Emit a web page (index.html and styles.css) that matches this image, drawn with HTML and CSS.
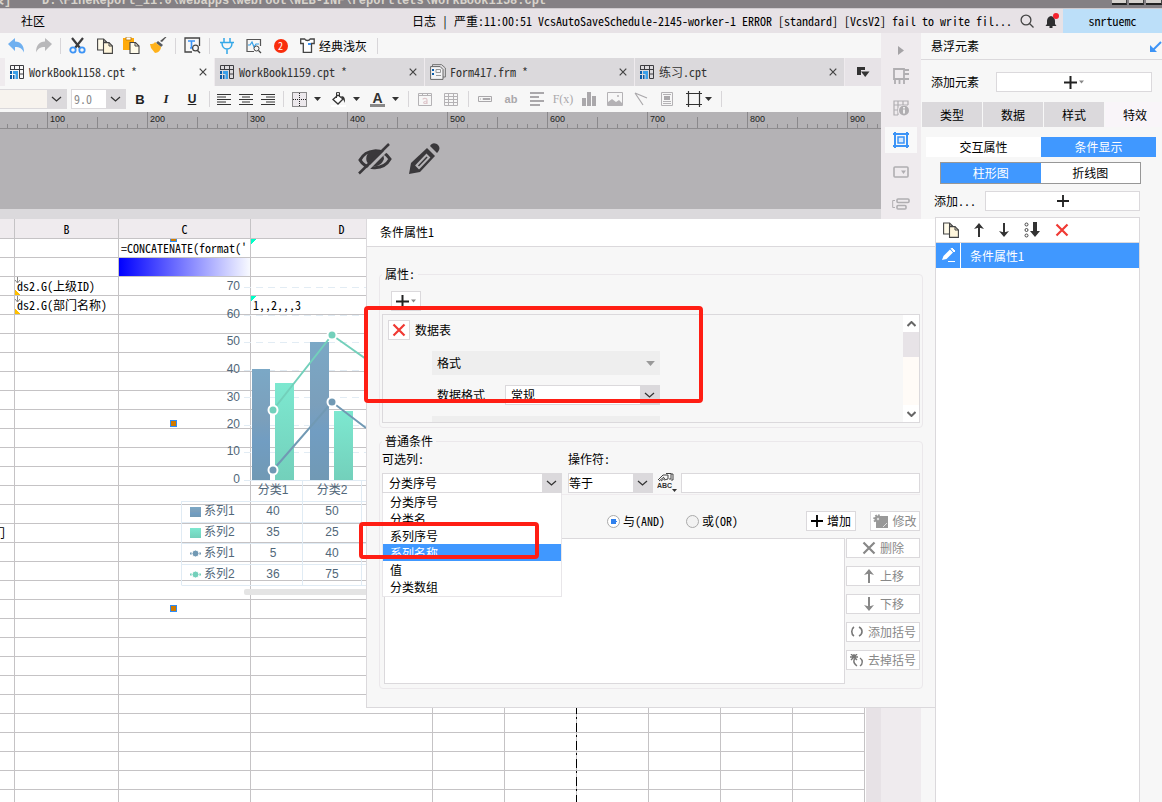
FILE: index.html
```html
<!DOCTYPE html>
<html lang="zh-CN">
<head>
<meta charset="utf-8">
<title>WorkBook1158.cpt</title>
<link rel="stylesheet" href="styles.css">
</head>
<body>
<svg class="defs" aria-hidden="true">
  <defs>
    <symbol id="cpt" viewBox="0 0 14 14"><path d="M.5 5V.5h13v13H9.500M.5 4.500h13M4.500.5v4M9.500.5v13M9.500 9h4" fill="none" stroke="#3c3c40"/><path d="M0 6h2v3H0zM0 10h2v4H0z" fill="#0a5ca8"/><path d="M3 6h5v8H5.500V9H3z" fill="#3aa0ea"/><path d="M3 10h1.500v4H3z" fill="#0a5ca8"/></symbol>
    <symbol id="close" viewBox="0 0 8 8"><path d="M.7.7l6.6 6.6M7.3.7L.7 7.3" stroke="#444" stroke-width="1.2" fill="none"/></symbol>
    <symbol id="down" viewBox="0 0 7 4"><path d="M0 0h7L3.5 4z" fill="currentColor"/></symbol>
    <symbol id="plus" viewBox="0 0 13 13"><path d="M6.5 0v13M0 6.5h13" stroke="currentColor" stroke-width="2"/></symbol>
    <symbol id="copy" viewBox="0 0 16 16"><path d="M.6 1h6l3 3v8H.6z" fill="#fffbea" stroke="#444" stroke-width="1.1"/><path d="M6.500 4.600h5.500l3.400 3.400v7.400H6.500z" fill="#fff6dc" stroke="#444" stroke-width="1.100"/><path d="M12 4.600v3.400h3.400M6.500 1v3h3" fill="none" stroke="#444"/></symbol>
    <symbol id="cross" viewBox="0 0 14 14"><path d="M1.500 1.500l11 11M12.500 1.500l-11 11" stroke="currentColor" stroke-width="2.200"/></symbol>
    <symbol id="up" viewBox="0 0 10 14"><path d="M5 14V3" fill="none" stroke="currentColor" stroke-width="2"/><path d="M0 6l5-6 5 6-5-1.500z" fill="currentColor"/></symbol>
    <symbol id="dn" viewBox="0 0 10 14"><path d="M5 0v11" stroke="currentColor" stroke-width="2"/><path d="M0 8l5 6 5-6-5 1.500z" fill="currentColor"/></symbol>
  </defs>
</svg>

<header class="titlebar"><span class="title-prefix">表]</span><span class="title-path">D:\FineReport_11.0\webapps\webroot\WEB-INF\reportlets\WorkBook1158.cpt</span>
  <span class="winbtns"><i class="w-min"></i><i class="w-max"></i><i class="w-x"></i></span></header>

<nav class="menubar">
  <a href="#" class="menu">社区</a>
  <span class="log">日志 | 严重:11:00:51 VcsAutoSaveSchedule-2145-worker-1 ERROR [standard] [VcsV2] fail to write fil...</span>
  <button class="ibtn search" aria-label="搜索"><svg width="14" height="14"><circle cx="6" cy="6" r="4.900" fill="none" stroke="#444" stroke-width="1.300"/><path d="M9.500 9.500l4 4" stroke="#444" stroke-width="1.300"/></svg></button>
  <button class="ibtn bell" aria-label="通知"><svg width="14" height="16"><path d="M6 3c-3 .5-4 3-4 5v3l-1.500 2h11L10 11V8c0-2-1-4.500-4-5z" fill="#2e2e30"/><path d="M4.500 14h3" stroke="#2e2e30" stroke-width="2"/><circle cx="11" cy="3" r="3" fill="#f5222d"/></svg></button>
  <button class="user">snrtuemc</button>
</nav>

<div class="main">
<main class="work">
  <div class="toolbar">
    <button class="tool" aria-label="撤销"><svg width="17" height="15"><path d="M0 6L7 0v3.500c6 0 9 4 9 11-2-4-4-5.500-9-5.500V13z" fill="#6fb0f0"/></svg></button>
    <button class="tool" aria-label="重做"><svg width="17" height="15"><path d="M17 6L10 0v3.500C4 3.500 1 7.500 1 14.500c2-4 4-5.500 9-5.500V13z" fill="#b8b8ba"/></svg></button>
    <i class="sep"></i>
    <button class="tool" aria-label="剪切"><svg width="17" height="17"><path d="M3 1l8 10M14 1L6 11" stroke="#3c3c3e" stroke-width="2.200"/><circle cx="4" cy="13" r="2.700" fill="none" stroke="#3d94f6" stroke-width="1.800"/><circle cx="13" cy="13" r="2.700" fill="none" stroke="#3d94f6" stroke-width="1.800"/></svg></button>
    <button class="tool" aria-label="复制"><svg width="16" height="16"><use href="#copy"/></svg></button>
    <button class="tool" aria-label="粘贴"><svg width="17" height="17"><path d="M0 1h11v12H0z" fill="#ffaa0a"/><path d="M3 0h5v3H3z" fill="#fff" stroke="#b47a10" stroke-width=".8"/><path d="M7 5.500h5.500L16 9v7.500H7z" fill="#fffbea" stroke="#444" stroke-width="1.100"/><path d="M12 5.500V9h4" fill="none" stroke="#444"/></svg></button>
    <button class="tool" aria-label="格式刷"><svg width="17" height="17"><path d="M16.500 0L12 5l-2-1L15 0z" fill="#555"/><path d="M8 4l5 4-2 2-5-4z" fill="#555a60"/><path d="M5 5l6 5c0 3-3 6-6 6L1 11 0 7c2 0 4 0 5-2z" fill="#ffb21c"/></svg></button>
    <i class="sep"></i>
    <button class="tool" aria-label="查找"><svg width="17" height="17"><path d="M15.500 9V1H1v14h7" fill="none" stroke="#444" stroke-width="1.300"/><path d="M4 4h7M7.500 4v7M6 11h3" stroke="#3d94f6" stroke-width="1.600"/><circle cx="11.500" cy="11" r="2.900" fill="#f7f7f7" stroke="#444" stroke-width="1.200"/><path d="M13.500 13.500L16 16" stroke="#444" stroke-width="1.400"/></svg></button>
    <i class="sep"></i>
    <button class="tool" aria-label="连接"><svg width="14" height="16"><path d="M4 0v4M10 0v4M0 4.500h14M2 5c0 8 10 8 10 0M7 11v5" fill="none" stroke="#35a8e8" stroke-width="1.500"/></svg></button>
    <button class="tool" aria-label="预览"><svg width="16" height="16"><path d="M14.500 8V1.500H1v12h7" fill="none" stroke="#555" stroke-width="1.200"/><path d="M2 7h2l2-3 2 5 2-3h3" fill="none" stroke="#35a0e8" stroke-width="1.200"/><circle cx="10.500" cy="10.500" r="2.500" fill="#f7f7f7" stroke="#444"/><path d="M12.500 12.500L15 15" stroke="#444" stroke-width="1.300"/></svg></button>
    <button class="tool"><span class="badge">2</span></button>
    <button class="theme"><svg width="15" height="15"><path d="M.7 1h4c1 2 4.500 2 5.500 0h4v4.500h-2.700v8.800H3.300V5.500H.7z" fill="#fff" stroke="#444" stroke-width="1.300"/><path d="M8 5h3v2H8z" fill="#3d94f6"/></svg>经典浅灰</button>
    <i class="sep"></i>
  </div>

  <div class="tabs">
    <div class="tab active"><svg width="14" height="14"><use href="#cpt"/></svg><span>WorkBook1158.cpt *</span><button class="x" aria-label="关闭"><svg width="8" height="8"><use href="#close"/></svg></button></div>
    <div class="tab"><svg width="14" height="14"><use href="#cpt"/></svg><span>WorkBook1159.cpt *</span><button class="x" aria-label="关闭"><svg width="8" height="8"><use href="#close"/></svg></button></div>
    <div class="tab form"><svg width="16" height="16"><path d="M2.500 3V.6h9L15.400 4v9H13" fill="none" stroke="#777"/><path d="M.6 2.600h9.600L13 5.500v9.900H.6z" fill="#f4f4f6" stroke="#666"/><path d="M2 5h2v2H2zM2 9h2v2H2z" fill="#0a5ca8"/><path d="M6 5.500h4.500v3H6zM6 11.500h5" fill="none" stroke="#999"/></svg><span>Form417.frm *</span><button class="x" aria-label="关闭"><svg width="8" height="8"><use href="#close"/></svg></button></div>
    <div class="tab"><svg width="14" height="14"><use href="#cpt"/></svg><span>练习.cpt</span><button class="x" aria-label="关闭"><svg width="8" height="8"><use href="#close"/></svg></button></div>
    <button class="more" aria-label="更多"><svg width="13" height="11"><path d="M0 0h8v3H4v5H0z" fill="#333"/><path d="M4 4.500h8.500L8.200 10z" fill="#333"/></svg></button>
  </div>

  <div class="toolbar format">
    <select class="combo font" aria-label="字体"><option></option></select>
    <select class="combo size" aria-label="字号"><option>9.0</option></select>
    <button class="tool bold">B</button><button class="tool ital">I</button><button class="tool und">U</button>
    <i class="sep"></i>
    <button class="tool al" aria-label="左对齐"><svg width="14" height="13"><path d="M0 1.500h14M0 4h9M0 6.500h14M0 9h9M0 11.500h14" stroke="#333"/></svg></button>
    <button class="tool al" aria-label="居中"><svg width="14" height="13"><path d="M0 1.500h14M3 4h8M0 6.500h14M3 9h8M0 11.500h14" stroke="#333"/></svg></button>
    <button class="tool al" aria-label="右对齐"><svg width="14" height="13"><path d="M0 1.500h14M5 4h9M0 6.500h14M5 9h9M0 11.500h14" stroke="#333"/></svg></button>
    <i class="sep"></i>
    <button class="tool dd" aria-label="边框"><svg width="15" height="15"><path d="M.5.5h14v14H.5zM7.500 1v14M1 7.500h14" fill="#ece8ec" stroke="#222" stroke-dasharray="1 1"/></svg><svg class="arr" width="7" height="4"><use href="#down"/></svg></button>
    <button class="tool dd" aria-label="填充"><svg width="15" height="15"><path d="M0 13h15v2H0z" fill="#fff"/><path d="M2 7.500L7 3l5 4-5 5z" fill="#fff" stroke="#333" stroke-width="1.300"/><path d="M5.500 6V.6h3v4" fill="none" stroke="#333"/><path d="M10 4c4 0 4 3 4 7l-2-4z" fill="#333"/></svg><svg class="arr" width="7" height="4"><use href="#down"/></svg></button>
    <button class="tool dd" aria-label="字色"><span class="fc">A</span><svg class="arr" width="7" height="4"><use href="#down"/></svg></button>
    <i class="sep"></i>
    <button class="tool off" aria-label="合并"><svg width="14" height="13"><path d="M.5.5h13v12H.5zM.5 2.500h13M4.500.5v2M9.500.5v2" fill="none" stroke="#b4b2b5"/><path d="M9 11V7c0-2-4-2-4-.5M9 8c-4 0-4 2.500-2 2.500 1 0 2-1 2-2" fill="none" stroke="#dfc8cc" stroke-width="1.200"/></svg></button>
    <button class="tool off" aria-label="表格"><svg width="14" height="13"><path d="M.5.5h13v12H.5zM.5 3.500h13M.5 6.500h13M.5 9.500h13M4.500.5v12M9.500.5v12" fill="none" stroke="#b4b2b5"/></svg></button>
    <i class="sep"></i>
    <button class="tool off" aria-label="控件"><svg width="14" height="6"><path d="M.5.5h13v5H.5zM2 3h1M5 2.500h7v1H5z" fill="none" stroke="#aaa8ab"/></svg></button>
    <button class="tool off ab">ab</button>
    <button class="tool off" aria-label="段落"><svg width="14" height="14"><path d="M0 1h14M0 5h9M0 9h14M0 13h10" stroke="#aaa8ab" stroke-width="2"/></svg></button>
    <button class="tool off fx">F(x)</button>
    <button class="tool off" aria-label="图表"><svg width="14" height="14"><path d="M0 6h4v8H0zM5 0h4v14H5zM10 4h4v10h-4z" fill="#aaa8ab"/></svg></button>
    <button class="tool off" aria-label="图片"><svg width="16" height="14"><path d="M.5.5h15v13H.5z" fill="none" stroke="#b4b2b5"/><path d="M1 13v-3l4-3 4 3 3-2 3 3v2z" fill="#b4b2b5"/><circle cx="11" cy="4" r="1" fill="#b4b2b5"/></svg></button>
    <button class="tool off" aria-label="斜线"><svg width="14" height="14"><path d="M1 1l12 5M1 1l8 12" fill="none" stroke="#aaa8ab" stroke-width="1.200"/></svg></button>
    <button class="tool off" aria-label="子报表"><svg width="12" height="14"><path d="M.5.5h11v13H.5z" fill="none" stroke="#b4b2b5"/><path d="M2 2.500h8M2 11.500h8M2 9.500h8" stroke="#b4b2b5"/><path d="M3 4h6v4H3z" fill="#aaa8ab"/></svg></button>
    <button class="tool dd float" aria-label="悬浮元素"><svg width="16" height="16"><path d="M2.500 0v16M13.500 0v16M0 2.500h16M0 13.500h16" stroke="#333" stroke-width="1.200"/></svg><svg class="arr" width="7" height="4"><use href="#down"/></svg></button>
    <i class="sep"></i>
  </div>

  <svg class="ruler" height="17">
    <defs><pattern id="minor" x="7" width="10" height="17" patternUnits="userSpaceOnUse"><path d="M.5 12v5" stroke="#8a888b"/></pattern>
    <pattern id="major" x="47" width="100" height="17" patternUnits="userSpaceOnUse"><path d="M.5 0v17M50.500 5v12" stroke="#8a888b"/></pattern></defs>
    <rect width="100%" height="17" fill="url(#minor)"/><rect width="100%" height="17" fill="url(#major)"/>
    <path d="M0 16.500h2000" stroke="#8e8c8f"/>
    <g><text x="50" y="10">100</text><text x="150" y="10">200</text><text x="250" y="10">300</text><text x="350" y="10">400</text><text x="450" y="10">500</text><text x="550" y="10">600</text><text x="650" y="10">700</text><text x="750" y="10">800</text><text x="850" y="10">900</text></g>
  </svg>

  <div class="stage">
    <svg width="34" height="32" aria-label="隐藏"><path d="M2 17C8 6 24 4 32 16 26 27 8 28 2 17z" fill="none" stroke="#3a383b" stroke-width="3"/><path d="M9 12c3-5 12-7 16-2l1 6c-2 5-6 8-12 7-5-2-7-6-5-11z" fill="#3a383b"/><path d="M32 4L3 33" stroke="#b4b2b5" stroke-width="3"/><path d="M31 1L1 30.500" stroke="#3a383b" stroke-width="2.500"/></svg>
    <svg width="32" height="32" aria-label="编辑"><path d="M1 31l2-11L19 5l8 8L12 29z" fill="#3a383b"/><path d="M22 3c2-4 6-3 8-1s2 5-1 8z" fill="#3a383b"/><path d="M8.500 22.500L18.500 12l2.500 2.500-10 10.500z" fill="none" stroke="#b4b2b5" stroke-width="2"/></svg>
  </div>

  <section class="sheet">
    <table class="grid">
      <colgroup><col class="c-a"><col class="c-b"><col class="c-c"><col class="c-d"><col class="c-n"><col class="c-n"><col class="c-n"><col class="c-n"><col class="c-n"><col class="c-n"></colgroup>
      <thead><tr><th></th><th>B</th><th>C</th><th>D</th><th></th><th></th><th></th><th></th><th></th><th></th></tr></thead>
      <tbody id="rows"></tbody>
    </table>
    <i class="pagebreak"></i>
    <svg class="chart" width="366" height="375" viewBox="0 239 366 375">
      <defs>
        <linearGradient id="b" x1="0" y1="0" x2="0" y2="1"><stop offset="0" stop-color="#7ba8c6"/><stop offset=".45" stop-color="#7b9fbb"/><stop offset=".65" stop-color="#719dc2"/><stop offset="1" stop-color="#7199b4"/></linearGradient>
        <linearGradient id="g" x1="0" y1="0" x2="0" y2="1"><stop offset="0" stop-color="#7de8d0"/><stop offset="1" stop-color="#73d0bb"/></linearGradient>
      </defs>
      <path d="M17.500 277v6M15 280l2.500 3 2.500-3M17.500 296v6M15 299l2.500 3 2.500-3" fill="none" stroke="#888"/>
      <path d="M244 287.500h122M244 315.500h122M244 342.500h122M244 370.500h122M244 397.500h122M244 425.500h122M244 452.500h122" stroke="#e2ecf4" stroke-dasharray="7 5"/>
      <g class="axis"><text x="240" y="290">70</text><text x="240" y="318">60</text><text x="240" y="345">50</text><text x="240" y="373">40</text><text x="240" y="401">30</text><text x="240" y="428">20</text><text x="240" y="455">10</text><text x="240" y="483">0</text></g>
      <g fill="url(#b)"><rect x="252" y="369" width="18" height="111"/><rect x="310" y="342" width="19" height="138"/></g>
      <g fill="url(#g)"><rect x="275" y="383" width="19" height="97"/><rect x="334" y="411" width="19" height="69"/></g>
      <path d="M244 480.500h122M181.500 501.500H366M181.500 522.500H366M181.500 543.500H366M181.500 564.500H366M181.500 585.500H366M181.500 501v84M302.500 480v105M361.500 480v105" stroke="#e0ebf4"/>
      <path d="M273 410l59-75 34 24" fill="none" stroke="#73d0bb" stroke-width="2"/><path d="M273 470l59-68 34 26" fill="none" stroke="#7199b4" stroke-width="2"/>
      <g stroke="#fff" stroke-width="2"><circle cx="273" cy="410" r="4.500" fill="#73d0bb"/><circle cx="332" cy="335" r="4.500" fill="#73d0bb"/><circle cx="273" cy="470" r="4.500" fill="#7199b4"/><circle cx="332" cy="402" r="4.500" fill="#7199b4"/></g>
      <g class="mid"><text x="273" y="494">分类1</text><text x="332" y="494">分类2</text><text x="273" y="515">40</text><text x="332" y="515">50</text><text x="273" y="536">35</text><text x="332" y="536">25</text><text x="273" y="557">5</text><text x="332" y="557">40</text><text x="273" y="578">36</text><text x="332" y="578">75</text></g>
      <g class="leg"><text x="204" y="515">系列1</text><text x="204" y="536">系列2</text><text x="204" y="557">系列1</text><text x="204" y="578">系列2</text></g>
      <rect x="190" y="507" width="11" height="10" fill="url(#b)"/><rect x="190" y="528" width="11" height="10" fill="url(#g)"/>
      <path d="M190 553.500h11" stroke="#7199b4" stroke-width="2"/><circle cx="195.500" cy="553.500" r="3.500" fill="#7199b4" stroke="#fff"/>
      <path d="M190 574.500h11" stroke="#73d0bb" stroke-width="2"/><circle cx="195.500" cy="574.500" r="3.500" fill="#73d0bb" stroke="#fff"/>
      <rect x="244" y="589" width="130" height="6" rx="2" fill="#e4e4e4"/>
      <g fill="#d07a00" stroke="#2f8cf5"><rect x="170.500" y="235.500" width="6" height="6"/><rect x="170.500" y="420.500" width="6" height="6"/><rect x="170.500" y="605.500" width="6" height="6"/></g>
    </svg>
    <i class="vscroll"></i>
  </section>
</main>

<nav class="rail">
  <button class="ribtn small" aria-label="展开"><svg width="6" height="9"><path d="M0 0l6 4.500L0 9z" fill="#a5a3a6"/></svg></button>
  <button class="ribtn" aria-label="单元格"><svg width="16" height="16"><path d="M1 11V1h10v10zM11 2h5M11 6h5M11 11h5M2 11v5M6.500 11v5M11 11v5" fill="none" stroke="#b0aeb1" stroke-width="1.800"/></svg></button>
  <button class="ribtn" aria-label="单元格属性"><svg width="16" height="16"><path d="M5 15H1V1h14v4M1 5h14M1 10h4M5 1v14M10 1v4" fill="none" stroke="#b0aeb1" stroke-width="1.200"/><circle cx="10.500" cy="10.500" r="5.500" fill="#efebee"/><circle cx="11" cy="10.500" r="5" fill="#b0aeb1"/><path d="M11 7v1.500M11 9.500v4" stroke="#fff" stroke-width="1.600"/></svg></button>
  <button class="ribtn on" aria-label="悬浮元素"><svg width="16" height="16"><path d="M2 0v16M14 0v16M0 2h16M0 14h16" stroke="#3d94f6" stroke-width="2"/><path d="M5 5h6v6H5z" fill="#d6e9ff" stroke="#3d94f6" stroke-width="1.500"/></svg></button>
  <button class="ribtn" aria-label="控件设置"><svg width="16" height="12"><rect x="1" y="1" width="14" height="10" rx="1" fill="none" stroke="#b0aeb1" stroke-width="1.600"/><path d="M8 4.500h5L10.500 8z" fill="#b0aeb1"/></svg></button>
  <button class="ribtn" aria-label="条件属性"><svg width="18" height="12"><rect x="5" y="1" width="12" height="3.500" rx="1" fill="none" stroke="#b0aeb1" stroke-width="1.600"/><rect x="5" y="7.500" width="9" height="3.500" rx="1" fill="none" stroke="#b0aeb1" stroke-width="1.600"/><path d="M3 2.500H.7v7H3" fill="none" stroke="#b0aeb1"/></svg></button>
</nav>

<aside class="panel">
  <div class="phead">悬浮元素<button class="ibtn" aria-label="收起"><svg width="12" height="11"><path d="M11 1L3 9" stroke="#3d94f6" stroke-width="2"/><path d="M0 11V4l7 7z" fill="#3d94f6"/></svg></button></div>
  <div class="prow"><span>添加元素</span><button class="wbtn grow" aria-label="添加元素"><svg width="13" height="13"><use href="#plus"/></svg><svg class="gray" width="5" height="4"><use href="#down"/></svg></button></div>
  <div class="ptabs"><button>类型</button><button>数据</button><button>样式</button><button class="on">特效</button></div>
  <div class="seg"><button>交互属性</button><button class="on">条件显示</button></div>
  <div class="seg framed"><button class="on">柱形图</button><button>折线图</button></div>
  <div class="prow add"><span>添加...</span><button class="wbtn grow" aria-label="添加条件"><svg width="12" height="12"><use href="#plus"/></svg></button></div>
  <div class="clist">
    <div class="ctools">
      <button class="ibtn" aria-label="复制"><svg width="16" height="16"><use href="#copy"/></svg></button>
      <button class="ibtn" aria-label="上移"><svg width="10" height="14"><use href="#up"/></svg></button>
      <button class="ibtn" aria-label="下移"><svg width="10" height="14"><use href="#dn"/></svg></button>
      <button class="ibtn" aria-label="排序"><svg width="16" height="16"><g fill="none" stroke="#444"><circle cx="2.500" cy="2.500" r="1.500"/><circle cx="2.500" cy="8" r="1.500"/><circle cx="2.500" cy="13.500" r="1.500"/></g><path d="M9 0h4v9h3l-5 6-5-6h3z" fill="#333"/></svg></button>
      <button class="ibtn red" aria-label="删除"><svg width="14" height="14"><use href="#cross"/></svg></button>
    </div>
    <div class="citem"><span class="cicon"><svg width="15" height="15"><path d="M1 12l1.500-4L9 1.500l3 3L5.500 11z" fill="#fff"/><path d="M10 .5l1-.5 3 3-1 1zM7 13.500h7" fill="#fff" stroke="#fff"/></svg></span><span>条件属性1</span></div>
  </div>
</aside>
</div>

<section class="dialog" role="dialog" aria-label="条件属性1">
  <h2>条件属性1</h2>
  <div class="dbody">
    <fieldset class="props">
      <legend>属性:</legend>
      <button class="wbtn addp" aria-label="添加属性"><svg width="13" height="13"><use href="#plus"/></svg><svg class="gray" width="5" height="4"><use href="#down"/></svg></button>
      <div class="pscroll">
        <div class="pbody">
          <div class="dtitle"><button class="wbtn red" aria-label="删除"><svg width="14" height="14"><use href="#cross"/></svg></button><span>数据表</span></div>
          <button class="fold">格式<svg width="9" height="5"><use href="#down"/></svg></button>
          <div class="frow"><label for="fmt">数据格式</label><select id="fmt" class="combo"><option>常规</option></select></div>
          <div class="fold"></div>
        </div>
        <div class="sbar"><button aria-label="向上"><svg width="9" height="6"><path d="M.5 5l4-4 4 4" fill="none" stroke="#666" stroke-width="2"/></svg></button><i></i><button aria-label="向下"><svg width="9" height="6"><path d="M.5 1l4 4 4-4" fill="none" stroke="#666" stroke-width="2"/></svg></button></div>
      </div>
    </fieldset>
    <fieldset class="conds">
      <legend>普通条件</legend>
      <div class="cgrid">
        <label for="col">可选列:</label><label for="op" class="oplab">操作符:</label>
        <div class="colpick"><select id="col" class="combo"><option>分类序号</option></select>
          <ul class="drop"><li>分类序号</li><li>分类名</li><li>系列序号</li><li class="sel">系列名称</li><li>值</li><li>分类数组</li></ul></div>
        <select id="op" class="combo op"><option>等于</option></select>
        <button class="ibtn abc" aria-label="值类型"><svg width="20" height="20"><path d="M1 7l5-5h5v4l-4 1M2 8l5-4M4 8l4-3M14 1h2v6h-2M9 .5h5V6h-2" fill="none" stroke="#444"/><path d="M15 16h5l-2.500 3z" fill="#333"/><text x="0" y="15">ABC</text></svg></button>
        <input type="text" aria-label="值">
      </div>
      <div class="logic">
        <label><input type="radio" name="l" checked>与(AND)</label><label class="or"><input type="radio" name="l">或(OR)</label>
        <button class="wbtn addc"><svg width="12" height="12"><use href="#plus"/></svg>增加</button>
        <button class="wbtn dim"><svg width="15" height="15"><path d="M5 2h10v12H3V9z" fill="#999"/><circle cx="5" cy="5" r="3.500" fill="#999" stroke="#999" stroke-width="2.500" stroke-dasharray="1.500 1.200"/><circle cx="5" cy="5" r="1.200" fill="#ddd"/><path d="M10 13l4-4" stroke="#ddd"/></svg>修改</button>
      </div>
      <div class="rules">
        <div class="rlist"></div>
        <div class="rbtns">
          <button class="wbtn dim"><svg width="14" height="14"><use href="#cross"/></svg>删除</button>
          <button class="wbtn dim"><svg width="14" height="14" viewBox="-2 0 14 14"><use href="#up" width="10" height="14"/></svg>上移</button>
          <button class="wbtn dim"><svg width="14" height="14" viewBox="-2 0 14 14"><use href="#dn" width="10" height="14"/></svg>下移</button>
          <button class="wbtn dim"><svg width="14" height="12"><path d="M4 1C1 3 1 8 4 10M9 1c4 2 4 7 0 9" fill="none" stroke="#777" stroke-width="1.600"/></svg>添加括号</button>
          <button class="wbtn dim"><svg width="14" height="13"><path d="M1 0l6 6M7 0L1 6M4 0v4M0 3h8M5 4c-2 3-1 6 2 8M10 4c3 2 3 6 0 8" fill="none" stroke="#777" stroke-width="1.400"/></svg>去掉括号</button>
        </div>
      </div>
    </fieldset>
  </div>
</section>
<i class="mark m1"></i><i class="mark m2"></i>
<script src="script.js"></script>
</body>
</html>
```
FILE: styles.css
```css
*{box-sizing:border-box}
body{margin:0;height:100vh;overflow:hidden;position:relative;display:flex;flex-direction:column;background:#f7f7f7;color:#000;font:12px/16px "Noto Sans Mono CJK SC","Liberation Mono","Noto Sans CJK SC",monospace}
button,select,input{font:inherit;color:inherit;margin:0;padding:0;border:0;border-radius:0;background:none}
button{display:flex;align-items:center;justify-content:center;white-space:nowrap}
svg{display:block;flex:none}
.defs{position:absolute;width:0;height:0}
.red{color:#f03a34}
.gray{color:#888}

.titlebar{flex:none;height:8px;overflow:hidden;display:flex;align-items:flex-end;background:#848084;color:#d8d4cc;font:bold 12px/14px "Liberation Mono","Noto Sans CJK SC",monospace;white-space:nowrap}
.title-prefix{width:42px;margin-left:-8px}
.title-path{margin-left:8px}
.winbtns{margin-left:auto;display:flex;gap:2px;height:8px;padding-bottom:3px}
.winbtns i{width:15px;background:#d5d1cd;border-right:1px solid #444;border-bottom:2px solid #222}
.winbtns .w-x{width:16px}

.menubar{flex:none;height:25px;display:flex;align-items:center;background:#e7e2e6;border-top:1px solid #cfcbcf}
.menu{color:#000;text-decoration:none;margin-left:21px}
.log{margin-left:auto;white-space:nowrap}
.search{margin-left:8px}
.bell{margin-left:11px}
.user{width:99px;height:24px;margin-left:4px;background:#bcdff9}

.main{flex:1;display:flex;min-height:0}
.work{flex:1;min-width:0;display:flex;flex-direction:column}
.toolbar{flex:none;height:25px;display:flex;align-items:center;padding-left:3px;overflow:hidden}
.tool{flex:none;width:27px;height:24px}
.sep{flex:none;width:1px;height:16px;background:#d8d6d9;margin:0 3px}
.badge{width:14px;height:14px;border-radius:7px;background:#f92d0c;color:#fff;font-size:10px;line-height:14px}
.theme{gap:4px;padding:0 7px 0 6px}

.tabs{flex:none;height:28px;display:flex;gap:1px;padding-left:5px;background:#efebee}
.tab{width:209px;display:flex;align-items:center;gap:5px;padding:0 7px 0 5px;background:#dbd9dc;color:#333;white-space:nowrap}
.tab.form{gap:4px}
.tab.active{background:#f7f7f7}
.tab .x{margin-left:auto}
.more{flex:1;background:#e7e3e7}

.format{height:26px;padding-left:0}
.format .sep{margin:0 3px 0 4px}
.format .tool{width:26px}
.combo{appearance:none;height:20px;border:1px solid #dbd9dc;background:#fff url("data:image/svg+xml,%3Csvg xmlns='http://www.w3.org/2000/svg' width='19' height='20'%3E%3Cpath d='M0 0h19v20H0z' fill='%23dbd9dc'/%3E%3Cpath d='M5 8l4.500 4L14 8' fill='none' stroke='%23333' stroke-width='1.300'/%3E%3C/svg%3E") right center no-repeat;padding:0 20px 0 6px}
.font{width:67px;background-color:#f7f3ee;border-left:0}
.size{width:55px;margin-left:4px;padding-left:2px;color:#888}
.format .bold{margin-left:1px;font:bold 13px "Liberation Sans",sans-serif;color:#222}
.ital{font:italic bold 13px "Liberation Serif",serif;color:#222}
.und{font:bold 12px "Liberation Sans",sans-serif;text-decoration:underline;color:#222}
.format .al{width:22px}
.format .dd{width:39px;gap:7px;color:#333}
.format .float{width:37px;gap:3px}
.fc{width:15px;border-bottom:3px solid #888;font:bold 14px/12px "Liberation Sans",sans-serif}
.off{color:#aaa8ab}
.ab{font:bold 11px "Liberation Sans",sans-serif}
.fx{font:12px "Liberation Serif",serif}

.ruler{width:100%;background:#b4b2b5}
.ruler text{font:9px "Liberation Sans",sans-serif;fill:#222}
.stage{flex:none;height:90px;display:flex;justify-content:center;gap:16px;padding-top:14px;padding-right:84px;background:#b4b2b5;border-bottom:10px solid #dbd9dc}

.sheet{flex:1;position:relative;overflow:hidden;display:flex;justify-content:space-between;background:#fff}
.grid{border-collapse:separate;border-spacing:0;table-layout:fixed;width:865px;align-self:flex-start;flex:none}
.c-a{width:15px}.c-b{width:104px}.c-c{width:132px}.c-d{width:182px}.c-n{width:72px}
.grid th,.grid td{height:19px;padding:0;border-right:1px solid #c5c3c5;border-bottom:1px solid #c5c3c5;font-weight:normal;line-height:18px;white-space:nowrap;overflow:hidden;text-align:left}
.grid th{height:20px;background:#efebee;text-align:center;line-height:19px}
.grid .a-text div{display:flex;justify-content:flex-end;padding-right:9px}
.grid .ds{padding-left:2px;background:linear-gradient(45deg,#ffc000 4px,transparent 4px)}
.grid .formula{padding-left:2px}
.grid .grad{background:linear-gradient(90deg,#0000ff,#f8faff)}
.grid .corner{padding-left:2px;background:linear-gradient(315deg,transparent calc(100% - 4px),#00ffc8 calc(100% - 4px))}
.pagebreak{position:absolute;left:576px;top:0;bottom:0;width:1px;background:repeating-linear-gradient(#000 0 9px,#c5c3c5 9px 12px,#000 12px 14px,#c5c3c5 14px 18px)}
.chart{position:absolute;left:0;top:20px}
.chart text{font:12px "Liberation Sans","Noto Sans CJK SC",sans-serif;fill:#516779}
.axis{text-anchor:end}
.mid{text-anchor:middle}
.vscroll{width:15px;background:#e7e2e6}

.rail{flex:none;width:40px;display:flex;flex-direction:column;align-items:center;background:#efebee;padding-top:5px}
.ribtn{width:32px;height:26px;margin-bottom:6px}
.ribtn.small{height:24px;margin-bottom:1px}
.ribtn.on{background:#f9f9f9}

.panel{flex:none;width:241px;display:flex;flex-direction:column;overflow:hidden}
.phead{flex:none;height:27px;display:flex;align-items:center;justify-content:space-between;padding-left:10px;border-bottom:1px solid #dbd9dc}
.prow{flex:none;display:flex;align-items:center;gap:17px;padding:12px 10px 10px}
.wbtn{height:20px;background:#fff;border:1px solid #dbd9dc;gap:2px;color:#222}
.wbtn.red{color:#f03a34}
.wbtn.dim{color:#888}
.grow{flex:1}
.ptabs{flex:none;display:flex;gap:1px;padding-left:1px;height:25px}
.ptabs button{flex:none;width:60px;background:#dbd9dc}
.ptabs .on{background:#f9f5f9}
.seg{flex:none;display:flex;height:20px;margin:10px 6px 0 5px}
.seg button{flex:1;background:#fff}
.seg .on{background:#4098ff;color:#fff}
.seg.framed{height:22px;margin:5px 21px 0 19px;border:1px solid #979797}
.prow.add{padding:7px 22px 6px 13px;gap:9px}
.clist{flex:1;margin:0 22px 0 14px;border:1px solid #dbd9dc;border-bottom:0;background:#fff}
.ctools{height:25px;display:flex;align-items:center;gap:15px;padding-left:7px;border-bottom:1px solid #dbd9dc;color:#333}
.ctools .red{color:#f03a34}
.citem{height:25px;display:flex;align-items:center;background:#4098ff;color:#fff}
.cicon{width:25px;height:25px;margin-right:9px;border-right:1px solid #fff;display:flex;align-items:center;justify-content:center}

.dialog{position:absolute;left:366px;top:219px;width:570px;background:#f7f7f7;border:1px solid #dbd9dc;border-top:0}
.dialog h2{margin:0;height:28px;padding:5px 13px;font-size:12px;line-height:16px;font-weight:normal;background:#fff;border-bottom:1px solid #dbd9dc}
.dbody{padding:19px 12px 18px}
fieldset{margin:0;min-width:0;border:1px solid #ebe8eb;border-radius:4px}
legend{padding:0 3px;line-height:16px}
.props{padding:9px 2px 4px}
.addp{width:30px;margin-left:9px;margin-bottom:3px}
.pscroll{height:109px;border:1px solid #dbd9dc;display:flex;overflow:hidden}
.pbody{flex:1;padding:5px;overflow:hidden}
.dtitle{display:flex;align-items:center;gap:5px}
.dtitle .wbtn{width:22px}
.fold{width:228px;height:24px;margin:11px 0 0 44px;padding:0 5px;justify-content:space-between;background:#eee}
.fold svg{color:#999}
.frow{display:flex;align-items:center;margin:10px 0 0 49px}
.frow label{width:68px}
.frow .combo{width:155px;padding-left:5px}
.sbar{width:16px;display:flex;flex-direction:column;background:#fffbf7}
.sbar button{height:17px;background:#fff}
.sbar i{height:25px;background:#e7e3e7;margin-bottom:auto}
.conds{margin-top:5px;padding:2px 2px 4px}
.cgrid{display:grid;grid-template-columns:180px 85px 29px 1fr;row-gap:6px;align-items:start;border-bottom:1px solid #efebee;padding-bottom:1px}
.oplab{grid-column:2/5;padding-left:6px}
.colpick{position:relative}
.colpick .combo{width:100%}
.cgrid .op{margin-left:6px;padding-left:0;width:85px}
.abc{margin-left:10px;height:20px}
.abc text{font:bold 7px "Liberation Sans",sans-serif;fill:#333}
.cgrid input{height:20px;margin-left:5px;background:#fff;border:1px solid #dbd9dc;min-width:0}
.drop{position:absolute;left:0;right:0;top:20px;margin:0;padding:0 0 1px;list-style:none;background:#fff;border:1px solid #e8e6e9;border-top:0;z-index:2}
.drop li{height:17px;line-height:17px;padding-left:7px}
.drop .sel{background:#4098ff;color:#fff}
.logic{display:flex;align-items:center;margin:16px 0 7px;padding-left:225px}
.logic label{display:flex;align-items:center;gap:3px;white-space:nowrap}
.logic .or{margin-left:21px}
.logic input{appearance:none;width:13px;height:13px;border:1px solid #aaa;border-radius:7px;background:#f2f2f2}
.logic input:checked{background:radial-gradient(circle,#2f80ed 0 3px,#fff 3px)}
.logic .wbtn{width:50px;gap:4px}
.logic .addc{margin-left:auto;margin-right:14px;color:#000}
.rules{display:flex;gap:1px}
.rlist{flex:1;margin-left:2px;height:146px;border:1px solid #dbd9dc;background:#fff}
.rbtns{width:74px;display:flex;flex-direction:column;gap:8px}
.rbtns .wbtn{gap:4px}

.mark{position:absolute;border:4px solid #ff1e14;border-radius:4px;z-index:5}
.m1{left:364px;top:306px;width:339px;height:97px}
.m2{left:359px;top:522px;width:180px;height:37px}
```
FILE: script.js
```js
const cells = {
  "0,2": ["formula", "=CONCATENATE(format('"],
  "0,3": ["corner", ""],
  "1,2": ["grad", ""],
  "2,1": ["ds", "ds2.G(上级ID)"],
  "3,1": ["ds", "ds2.G(部门名称)"],
  "3,3": ["corner", "1,,2,,,3"],
  "15,0": ["a-text", "门"]
};
const body = document.getElementById("rows");
for (let r = 0; r < 60; r++) {
  const tr = body.insertRow();
  for (let c = 0; c < 10; c++) {
    const td = tr.insertCell();
    const cell = cells[r + "," + c];
    if (cell) {
      td.className = cell[0];
      const div = document.createElement("div");
      div.textContent = cell[1];
      td.append(div);
    }
  }
}
```
